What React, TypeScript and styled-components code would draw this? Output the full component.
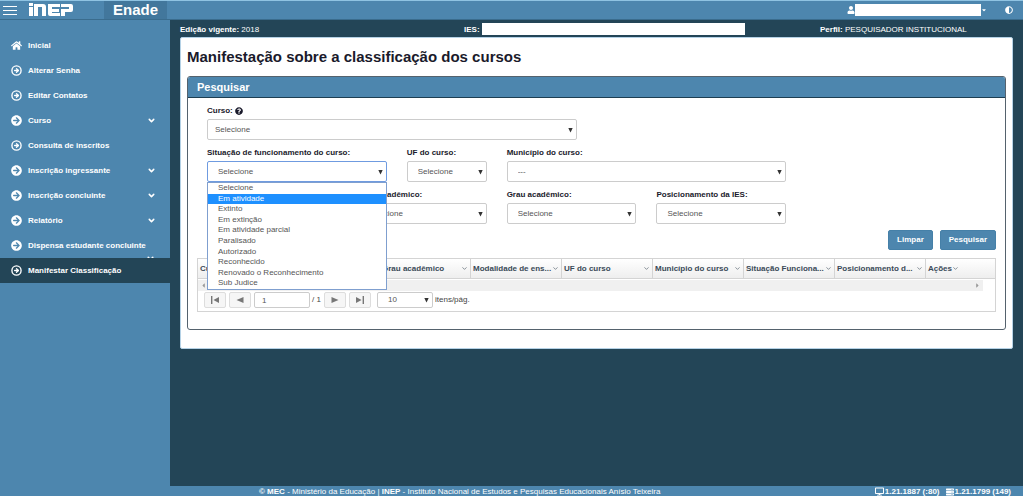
import React from 'react';
import styled, { createGlobalStyle, css } from 'styled-components';
import {
  FaAdjust,
  FaArrowCircleRight,
  FaCaretDown,
  FaCaretLeft,
  FaCaretRight,
  FaDesktop,
  FaHome,
  FaQuestionCircle,
  FaServer,
  FaUser,
} from 'react-icons/fa';
import { ChevronDown, CircleArrowRight } from 'lucide-react';

const blue = '#4d86ae';
const navy = '#234557';

const GlobalStyle = createGlobalStyle`
  * { box-sizing: border-box; }
  body {
    margin: 0;
    background: ${navy};
    color: #1a1a2b;
    font-family: "Liberation Sans", Arial, sans-serif;
    font-size: 8px;
    line-height: 12px;
  }
  button, input, select { font: inherit; color: inherit; margin: 0; }
`;

const Page = styled.div`
  min-height: 100vh;
  display: flex;
  flex-direction: column;
`;

const TopBar = styled.header`
  display: flex;
  align-items: center;
  height: 20px;
  background: ${blue};
  border-top: 1px solid #8fc3e2;
  border-bottom: 1px solid #3a6c8d;
  color: #fff;
`;

const MenuButton = styled.button`
  display: flex;
  padding: 0;
  margin-left: 3px;
  border: 0;
  background: none;
`;

const Logo = styled.svg`
  margin-left: 11px;
`;

const AppName = styled.div`
  align-self: stretch;
  margin-left: 30px;
  padding: 0 9px;
  background: #42779c;
  font-size: 15px;
  font-weight: bold;
  line-height: 18px;
`;

const UserArea = styled.div`
  display: flex;
  align-items: center;
  margin-left: auto;
  margin-right: 10px;
`;

const UserName = styled.span`
  width: 126px;
  height: 12px;
  background: #fff;
`;

const Contrast = styled.button`
  display: flex;
  margin-left: 18px;
  padding: 0;
  border: 0;
  background: none;
`;

const Body = styled.div`
  flex: 1;
  display: flex;
`;

const Sidebar = styled.nav`
  flex: none;
  width: 170px;
  padding-top: 13px;
  background: ${blue};
`;

const MenuItem = styled.a<{ $active?: boolean }>`
  display: flex;
  align-items: center;
  gap: 6px;
  height: 25px;
  padding: 0 14px 0 11px;
  overflow: hidden;
  color: #fff;
  background: ${(p) => (p.$active ? navy : 'transparent')};
  font-weight: bold;
  text-decoration: none;
  white-space: nowrap;
  svg { flex: none; }
`;

const Chevron = styled(ChevronDown)<{ $wrapped?: boolean }>`
  margin-left: auto;
  ${(p) => p.$wrapped && css`
    align-self: flex-end;
    margin-left: -6px;
    margin-bottom: -5px;
  `}
`;

const Main = styled.main`
  flex: 1;
  min-width: 0;
  display: flex;
  flex-direction: column;
  padding: 0 10px;
`;

const InfoBar = styled.div`
  display: grid;
  grid-template-columns: 284px 1fr 193px;
  height: 17px;
  color: #fff;
  line-height: 19px;
`;

const Ies = styled.div`
  display: flex;
  gap: 2px;
`;

const IesName = styled.span`
  width: 263px;
  height: 12px;
  margin-top: 3px;
  background: #fff;
`;

const Card = styled.section`
  padding: 10px 6px 18px;
  border: 1px solid #b5d2e6;
  border-radius: 2px;
  background: #fff;
`;

const Title = styled.h1`
  margin: 0 0 10px;
  font-size: 15px;
  line-height: 18px;
`;

const Panel = styled.section`
  border: 1px solid #55626d;
  border-radius: 3px;
  overflow: hidden;
`;

const PanelTitle = styled.h2`
  margin: 0;
  padding: 0 9px;
  border-bottom: 1px solid #1d3e52;
  background: ${blue};
  color: #fff;
  font-size: 11px;
  line-height: 20px;
`;

const PanelBody = styled.div`
  padding: 7px 9px 17px;
`;

const Fields = styled.div`
  display: grid;
  grid-template-columns: repeat(16, 1fr);
  row-gap: 7px;
`;

const Field = styled.div<{ $span: number; $start?: number; $inset?: number }>`
  grid-column: ${(p) => p.$start ?? 'auto'} / span ${(p) => p.$span};
  position: relative;
  min-width: 0;
  padding: 0 ${(p) => p.$inset ?? 10}px 0 10px;
`;

const Label = styled.label`
  display: flex;
  align-items: center;
  gap: 2px;
  height: 12px;
  margin-bottom: 2px;
  font-weight: bold;
  white-space: nowrap;
`;

const SelectBox = styled.div`
  position: relative;
`;

const Select = styled.select<{ $focused?: boolean; $indent?: number; $height?: number }>`
  display: block;
  appearance: none;
  width: 100%;
  height: ${(p) => p.$height ?? 21}px;
  padding: 0 9px 0 ${(p) => p.$indent ?? 10}px;
  border: 1px solid ${(p) => (p.$focused ? '#6f9be0' : '#ccc')};
  border-radius: 2px;
  background: #fff;
  color: #555;
  outline: none;
`;

const Arrow = styled.svg`
  position: absolute;
  top: 50%;
  right: 4px;
  margin-top: -2px;
  pointer-events: none;
`;

const OptionList = styled.ul`
  position: absolute;
  z-index: 2;
  top: 35px;
  left: 10px;
  right: 10px;
  display: grid;
  grid-template-rows: repeat(10, 1fr);
  height: 108px;
  margin: 0;
  padding: 0;
  border: 1px solid #7f9fcf;
  background: #fff;
  color: #555;
  list-style: none;
  line-height: 10px;
`;

const Option = styled.li<{ $highlight?: boolean }>`
  padding: 0 10px;
  ${(p) => p.$highlight && css`
    background: #1e90ff;
    color: #fff;
  `}
`;

const Actions = styled.div`
  display: flex;
  justify-content: flex-end;
  gap: 7px;
  margin: 6px 0 8px;
`;

const Button = styled.button`
  height: 20px;
  padding: 0 8px;
  border: 1px solid #4580a8;
  border-radius: 2px;
  background: ${blue};
  color: #fff;
  font-weight: bold;
`;

const Grid = styled.div`
  border: 1px solid #d4d4d4;
`;

const Table = styled.table`
  width: 100%;
  table-layout: fixed;
  border-collapse: separate;
  border-spacing: 0;
`;

const Th = styled.th<{ $last?: boolean }>`
  width: ${(p) => (p.$last ? 'auto' : '91px')};
  height: 20px;
  padding: 0 2px;
  border-right: ${(p) => (p.$last ? '0' : '1px solid #d4d4d4')};
  border-bottom: 1px solid #d4d4d4;
  background: linear-gradient(#fff, #eee);
  color: #3a4a58;
  text-align: left;
`;

const HeadCell = styled.div<{ $tight?: boolean }>`
  display: flex;
  align-items: center;
  justify-content: ${(p) => (p.$tight ? 'flex-start' : 'space-between')};
  white-space: nowrap;
  svg { flex: none; }
`;

const ScrollTrack = styled.div`
  display: flex;
  align-items: center;
  justify-content: space-between;
  height: 11px;
  margin: 1px 12px 0 0;
  padding: 0 2px;
  background: #f0f0f0;
  color: #999;
`;

const Pager = styled.div`
  display: flex;
  align-items: center;
  height: 20px;
  padding: 0 6px 2px;
  color: #444;
`;

const PagerButton = styled.button`
  display: flex;
  align-items: center;
  justify-content: center;
  width: 22px;
  height: 16px;
  margin-right: 3px;
  padding: 0;
  border: 1px solid #ddd;
  border-radius: 2px;
  background: #f6f6f6;
  color: #777;
`;

const PageInput = styled.input`
  width: 56px;
  height: 16px;
  padding: 0 7px;
  border: 1px solid #ccc;
  border-radius: 2px;
  background: #fff;
  color: #555;
`;

const PageCount = styled.span`
  width: 14px;
  padding-left: 2px;
  white-space: nowrap;
`;

const PageSize = styled.div`
  position: relative;
  width: 56px;
  margin: 0 2px 0 3px;
`;

const Footer = styled.footer`
  display: grid;
  grid-template-columns: 259px 1fr auto;
  height: 10px;
  padding-right: 12px;
  background: ${blue};
  color: #fff;
  line-height: 11px;
  white-space: nowrap;
`;

const Copyright = styled.span`
  grid-column: 2;
`;

const Versions = styled.div`
  display: flex;
  gap: 6px;
  font-weight: bold;
`;

const Version = styled.span`
  display: flex;
  align-items: center;
  gap: 1px;
`;

const menu = [
  { label: 'Inicial', icon: 'home' },
  { label: 'Alterar Senha', icon: 'outline' },
  { label: 'Editar Contatos', icon: 'outline' },
  { label: 'Curso', icon: 'solid' },
  { label: 'Consulta de inscritos', icon: 'outline' },
  { label: 'Inscrição ingressante', icon: 'solid' },
  { label: 'Inscrição concluinte', icon: 'solid' },
  { label: 'Relatório', icon: 'solid' },
  { label: 'Dispensa estudante concluinte', icon: 'solid', wrapped: true },
  { label: 'Manifestar Classificação', icon: 'outline', active: true },
];

const situations = [
  'Selecione',
  'Em atividade',
  'Extinto',
  'Em extinção',
  'Em atividade parcial',
  'Paralisado',
  'Autorizado',
  'Reconhecido',
  'Renovado o Reconhecimento',
  'Sub Judice',
];

const columns = [
  'Curso',
  'Código',
  'Grau acadêmico',
  'Modalidade de ens...',
  'UF do curso',
  'Município do curso',
  'Situação Funciona...',
  'Posicionamento d...',
  'Ações',
];

const MenuIcon = ({ kind }: { kind: string }) => {
  if (kind === 'home') return <FaHome size={11} />;
  if (kind === 'solid') return <FaArrowCircleRight size={11} />;
  return <CircleArrowRight size={11} strokeWidth={3} />;
};

const DownArrow = () => (
  <Arrow width="5" height="5" viewBox="0 0 5 5" aria-hidden="true">
    <path d="M.3 0h4.4L2.5 4.6z" fill="#333" />
  </Arrow>
);

const pagerShapes = {
  first: 'M0 0h1.4v8H0zM8 1v6L2.4 4z',
  previous: 'M7.5 1v6L.5 4z',
  next: 'M.5 1v6l7-3z',
  last: 'M6.6 0H8v8H6.6zM0 1v6l5.6-3z',
};

const PagerIcon = ({ shape }: { shape: keyof typeof pagerShapes }) => (
  <svg width="8" height="8" viewBox="0 0 8 8" fill="currentColor" aria-hidden="true">
    <path d={pagerShapes[shape]} />
  </svg>
);

type SelectFieldProps = {
  id: string;
  label: string;
  span: number;
  start?: number;
  value?: string;
};

const SelectField = ({ id, label, span, start, value = 'Selecione' }: SelectFieldProps) => (
  <Field $span={span} $start={start}>
    <Label htmlFor={id}>{label}</Label>
    <SelectBox>
      <Select id={id}>
        <option>{value}</option>
      </Select>
      <DownArrow />
    </SelectBox>
  </Field>
);

export default function App() {
  return (
    <Page>
      <GlobalStyle />
      <TopBar>
        <MenuButton aria-label="Menu">
          <svg width="14" height="11" viewBox="0 0 14 11" stroke="#fff">
            <path d="M0 1.5h14M0 5.5h14M0 9.5h14" />
          </svg>
        </MenuButton>
        <Logo width="46" height="14" viewBox="0 0 46 14" role="img" aria-label="INEP">
          <g fill="#fff">
            <rect x="1" y="0" width="4" height="3" />
            <rect x="1" y="4" width="4" height="9" />
            <path d="M6 1h9q3 0 3 3v9h-4V4h-4v9H6z" />
            <path d="M20 1h12v3h-8v2h7v3h-7v1h8v3H22q-2 0-2-2z" />
            <path d="M33 1h10q2 0 2 2v4q0 2-2 2h-6v4h-4V6h8V4h-8z" />
          </g>
        </Logo>
        <AppName>Enade</AppName>
        <UserArea>
          <FaUser size={8} />
          <UserName />
          <FaCaretDown size={6} />
          <Contrast aria-label="Alto contraste">
            <FaAdjust size={8} color="#fff" />
          </Contrast>
        </UserArea>
      </TopBar>
      <Body>
        <Sidebar>
          {menu.map((item) => (
            <MenuItem key={item.label} href="#" $active={item.active}>
              <MenuIcon kind={item.icon} />
              {item.label}
              {item.icon === 'solid' && <Chevron size={9} strokeWidth={4} $wrapped={item.wrapped} />}
            </MenuItem>
          ))}
        </Sidebar>
        <Main>
          <InfoBar>
            <div><b>Edição vigente:</b> 2018</div>
            <Ies><b>IES:</b><IesName /></Ies>
            <div><b>Perfil:</b> PESQUISADOR INSTITUCIONAL</div>
          </InfoBar>
          <Card>
            <Title>Manifestação sobre a classificação dos cursos</Title>
            <Panel>
              <PanelTitle>Pesquisar</PanelTitle>
              <PanelBody>
                <Fields>
                  <Field $span={8} $inset={20}>
                    <Label htmlFor="curso">Curso: <FaQuestionCircle size={8} /></Label>
                    <SelectBox>
                      <Select id="curso" $indent={7}>
                        <option>Selecione</option>
                      </Select>
                      <DownArrow />
                    </SelectBox>
                  </Field>
                  <Field $span={4} $start={1}>
                    <Label htmlFor="situacao">Situação de funcionamento do curso:</Label>
                    <SelectBox>
                      <Select id="situacao" $focused>
                        <option>Selecione</option>
                      </Select>
                      <DownArrow />
                    </SelectBox>
                    <OptionList role="listbox" aria-label="Situação de funcionamento do curso">
                      {situations.map((name) => (
                        <Option
                          key={name}
                          role="option"
                          aria-selected={name === 'Em atividade'}
                          $highlight={name === 'Em atividade'}
                        >
                          {name}
                        </Option>
                      ))}
                    </OptionList>
                  </Field>
                  <SelectField id="uf" label="UF do curso:" span={2} />
                  <SelectField id="municipio" label="Município do curso:" span={6} value="---" />
                  <SelectField id="nivel" label="Nível acadêmico:" span={3} start={4} />
                  <SelectField id="grau" label="Grau acadêmico:" span={3} />
                  <SelectField id="posicionamento" label="Posicionamento da IES:" span={3} />
                </Fields>
                <Actions>
                  <Button>Limpar</Button>
                  <Button>Pesquisar</Button>
                </Actions>
                <Grid>
                  <Table>
                    <thead>
                      <tr>
                        {columns.map((name) => (
                          <Th key={name} $last={name === 'Ações'}>
                            <HeadCell $tight={name === 'Ações'}>
                              {name}
                              <ChevronDown size={7} strokeWidth={2} />
                            </HeadCell>
                          </Th>
                        ))}
                      </tr>
                    </thead>
                  </Table>
                  <ScrollTrack>
                    <FaCaretLeft size={7} />
                    <FaCaretRight size={7} />
                  </ScrollTrack>
                  <Pager>
                    <PagerButton aria-label="Primeira página"><PagerIcon shape="first" /></PagerButton>
                    <PagerButton aria-label="Página anterior"><PagerIcon shape="previous" /></PagerButton>
                    <PageInput aria-label="Página" defaultValue="1" />
                    <PageCount>/ 1</PageCount>
                    <PagerButton aria-label="Próxima página"><PagerIcon shape="next" /></PagerButton>
                    <PagerButton aria-label="Última página"><PagerIcon shape="last" /></PagerButton>
                    <PageSize>
                      <Select id="tamanho" $height={16}>
                        <option>10</option>
                      </Select>
                      <DownArrow />
                    </PageSize>
                    <label htmlFor="tamanho">itens/pág.</label>
                  </Pager>
                </Grid>
              </PanelBody>
            </Panel>
          </Card>
        </Main>
      </Body>
      <Footer>
        <Copyright>
          <b>© MEC</b> - Ministério da Educação | <b>INEP</b> - Instituto Nacional de Estudos e Pesquisas Educacionais Anísio Teixeira
        </Copyright>
        <Versions>
          <Version><FaDesktop size={9} />1.21.1887 (:80)</Version>
          <Version><FaServer size={8} />1.21.1799 (149)</Version>
        </Versions>
      </Footer>
    </Page>
  );
}
